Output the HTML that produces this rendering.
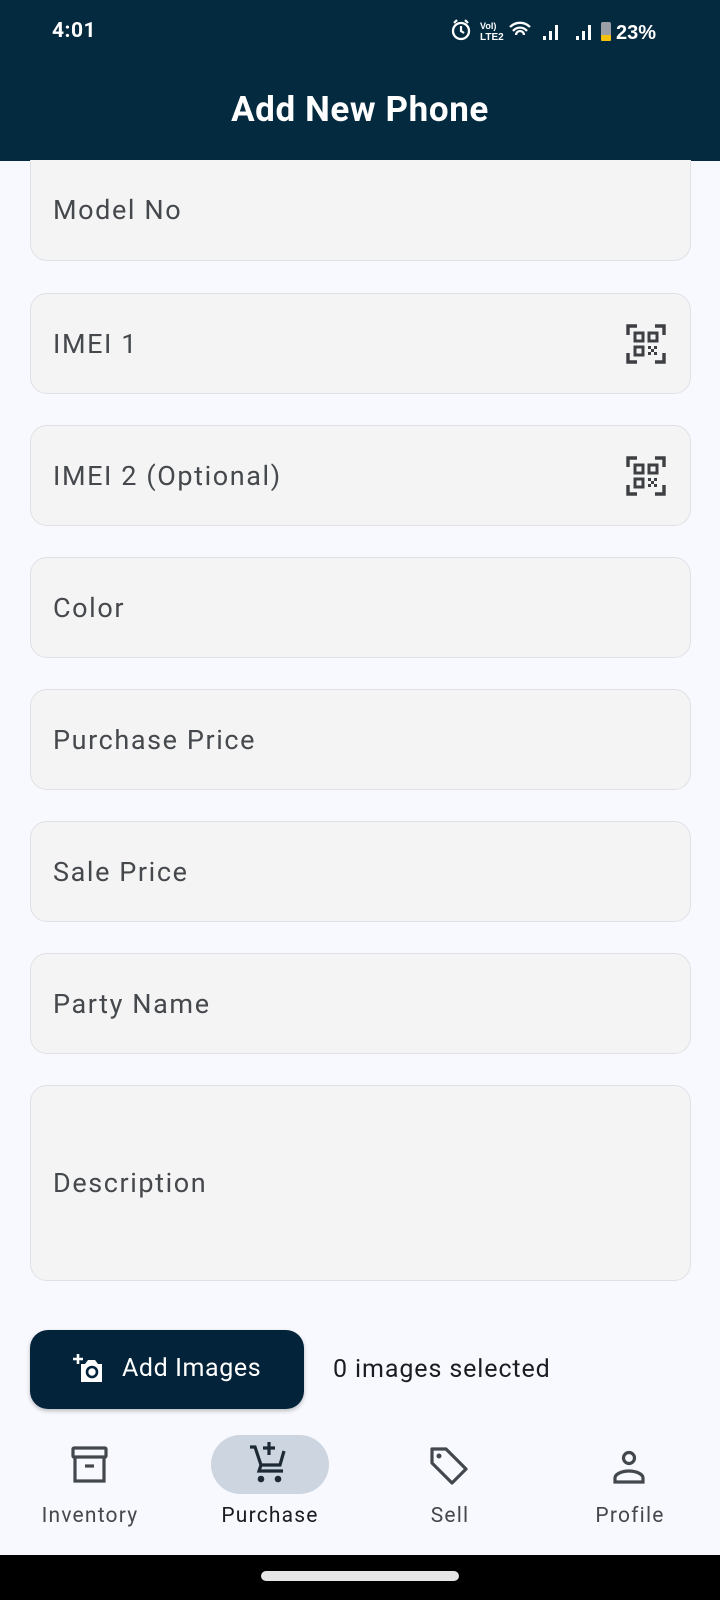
<!DOCTYPE html>
<html><head><meta charset="utf-8"><style>
*{margin:0;padding:0;box-sizing:border-box}
body{width:720px;height:1600px;background:#f8f9fe;font-family:"Roboto","Liberation Sans",sans-serif;position:relative;overflow:hidden;color:#43474e}
.top{position:absolute;left:0;top:0;width:720px;height:161px;background:#032a3f;color:#fff}
.time{position:absolute;left:52px;top:19px;font-size:21px;font-weight:bold;letter-spacing:0.5px}
.title{position:absolute;left:0;width:720px;top:89px;text-align:center;font-size:35px;font-weight:bold;letter-spacing:0.6px}
.f{position:absolute;left:30px;width:661px;height:101px;background:#f4f4f4;border:1.5px solid #dfe1e5;border-radius:17px}
.f span{position:absolute;left:22px;top:50%;transform:translateY(-50%);font-size:27px;color:#45484c;letter-spacing:1.6px}
.qr{position:absolute;right:24px;top:50%;transform:translateY(-50%)}
.btn{position:absolute;left:30px;top:1330px;width:274px;height:79px;background:#03233a;border-radius:18px;box-shadow:0 2px 4px rgba(0,0,0,.25);color:#fff}
.btn span{position:absolute;left:92px;top:24px;font-size:25px;letter-spacing:0.6px}
.sel{position:absolute;left:333px;top:1355px;font-size:25px;color:#1b1c1f;letter-spacing:0.9px}
.nav{position:absolute;top:1504px;font-size:21px;color:#44474c;text-align:center;width:180px;letter-spacing:1.2px}
.bar{position:absolute;left:0;top:1555px;width:720px;height:45px;background:#000}
.home{position:absolute;left:261px;top:1571px;width:198px;height:10px;border-radius:5px;background:#e6e6e6}
</style></head><body>
<div class="top">
<div class="time">4:01</div>
<div style="position:absolute;left:450px;top:18px;width:220px;height:26px;">
<svg width="220" height="26" viewBox="0 0 220 26">
<circle cx="11" cy="13" r="8" fill="none" stroke="#fff" stroke-width="2.3"/><path d="M11 8v5l3 2M4 5l3-3M18 5l-3-3" stroke="#fff" stroke-width="2.2" fill="none"/>
<text x="30" y="11" font-size="9" fill="#fff" font-family="Liberation Sans" font-weight="bold">VoI)</text>
<text x="30" y="22" font-size="10" fill="#fff" font-family="Liberation Sans" font-weight="bold">LTE2</text>
<path d="M60 9a14 14 0 0 1 20 0M63 13a9 9 0 0 1 14 0M66 17a4 4 0 0 1 8 0" stroke="#fff" stroke-width="2.3" fill="none"/>
<rect x="93" y="18" width="3" height="4" fill="#fff"/><rect x="99" y="13" width="3" height="9" fill="#fff"/><rect x="105" y="7" width="3" height="15" fill="#fff"/>
<rect x="126" y="18" width="3" height="4" fill="#fff"/><rect x="132" y="13" width="3" height="9" fill="#fff"/><rect x="138" y="7" width="3" height="15" fill="#fff"/>
<rect x="151" y="4" width="10" height="19" rx="2" fill="#9aa0a6"/><rect x="151" y="17" width="10" height="6" rx="1" fill="#f4c20d"/>
<text x="166" y="21" font-size="20" fill="#fff" font-family="Liberation Sans" font-weight="bold">23%</text>
</svg></div>
<div class="title">Add New Phone</div>
</div>

<div class="f" style="top:160px;border-top-left-radius:0;border-top-right-radius:0;border-top:none;height:101px"><span>Model No</span></div>
<div class="f" style="top:293px"><span>IMEI 1</span>
<svg class="qr" width="40" height="40" viewBox="0 0 40 40"><g fill="none" stroke="#3d3f43" stroke-width="3.4"><path d="M2 11V2h9M29 2h9v9M38 29v9h-9M11 38H2v-9"/><rect x="9" y="9" width="8" height="8" stroke-width="3"/><rect x="23" y="9" width="8" height="8" stroke-width="3"/><rect x="9" y="23" width="8" height="8" stroke-width="3"/></g><g fill="#3d3f43"><rect x="22" y="22" width="3" height="3"/><rect x="28" y="22" width="3" height="3"/><rect x="25" y="25" width="3" height="3"/><rect x="22" y="28" width="3" height="3"/><rect x="28" y="28" width="3" height="3"/></g></svg></div>
<div class="f" style="top:425px"><span>IMEI 2 (Optional)</span>
<svg class="qr" width="40" height="40" viewBox="0 0 40 40"><g fill="none" stroke="#3d3f43" stroke-width="3.4"><path d="M2 11V2h9M29 2h9v9M38 29v9h-9M11 38H2v-9"/><rect x="9" y="9" width="8" height="8" stroke-width="3"/><rect x="23" y="9" width="8" height="8" stroke-width="3"/><rect x="9" y="23" width="8" height="8" stroke-width="3"/></g><g fill="#3d3f43"><rect x="22" y="22" width="3" height="3"/><rect x="28" y="22" width="3" height="3"/><rect x="25" y="25" width="3" height="3"/><rect x="22" y="28" width="3" height="3"/><rect x="28" y="28" width="3" height="3"/></g></svg></div>
<div class="f" style="top:557px"><span>Color</span></div>
<div class="f" style="top:689px"><span>Purchase Price</span></div>
<div class="f" style="top:821px"><span>Sale Price</span></div>
<div class="f" style="top:953px"><span>Party Name</span></div>
<div class="f" style="top:1085px;height:196px"><span>Description</span></div>

<div class="btn">
<svg style="position:absolute;left:42px;top:23px" width="32" height="32" viewBox="0 0 32 32"><path d="M6 1v10M1 6h10" stroke="#fff" stroke-width="2.6"/><path d="M9 11h4l3-4h7l3 4h4v18H9z" fill="#fff"/><circle cx="20" cy="19" r="5" fill="none" stroke="#03233a" stroke-width="2.6"/></svg>
<span>Add Images</span></div>
<div class="sel">0 images selected</div>

<div style="position:absolute;left:211px;top:1435px;width:118px;height:59px;border-radius:30px;background:#ccd5e0"></div>
<svg style="position:absolute;left:70px;top:1445px" width="40" height="40" viewBox="0 0 40 40"><g fill="none" stroke="#43474e" stroke-width="3.2"><rect x="3" y="3" width="33" height="9" rx="1"/><path d="M5 12v24h29V12"/><path d="M15 21h9"/></g></svg>
<svg style="position:absolute;left:248px;top:1440px" width="44" height="48" viewBox="0 0 44 48"><g fill="none" stroke="#1d2a36" stroke-width="3.2"><path d="M2 7h5l6 18h19l4-14"/><path d="M13 25l-2 6h24"/><path d="M21 2v13M15 8h12"/></g><circle cx="13" cy="39" r="3.3" fill="#1d2a36"/><circle cx="30" cy="39" r="3.3" fill="#1d2a36"/></svg>
<svg style="position:absolute;left:429px;top:1445px" width="42" height="42" viewBox="0 0 42 42"><g fill="none" stroke="#43474e" stroke-width="3.2" stroke-linejoin="round"><path d="M3 4h14l20 20-14 14L3 18z"/></g><circle cx="10" cy="11" r="2.5" fill="#43474e"/></svg>
<svg style="position:absolute;left:612px;top:1450px" width="34" height="36" viewBox="0 0 34 36"><g fill="none" stroke="#43474e" stroke-width="3.2"><circle cx="17" cy="8" r="5.5"/><path d="M3 32v-4c0-4 7-7 14-7s14 3 14 7v4z"/></g></svg>
<div class="nav" style="left:0">Inventory</div>
<div class="nav" style="left:180px;color:#1b1c1f">Purchase</div>
<div class="nav" style="left:360px">Sell</div>
<div class="nav" style="left:540px">Profile</div>

<div class="bar"></div><div class="home"></div>
</body></html>
